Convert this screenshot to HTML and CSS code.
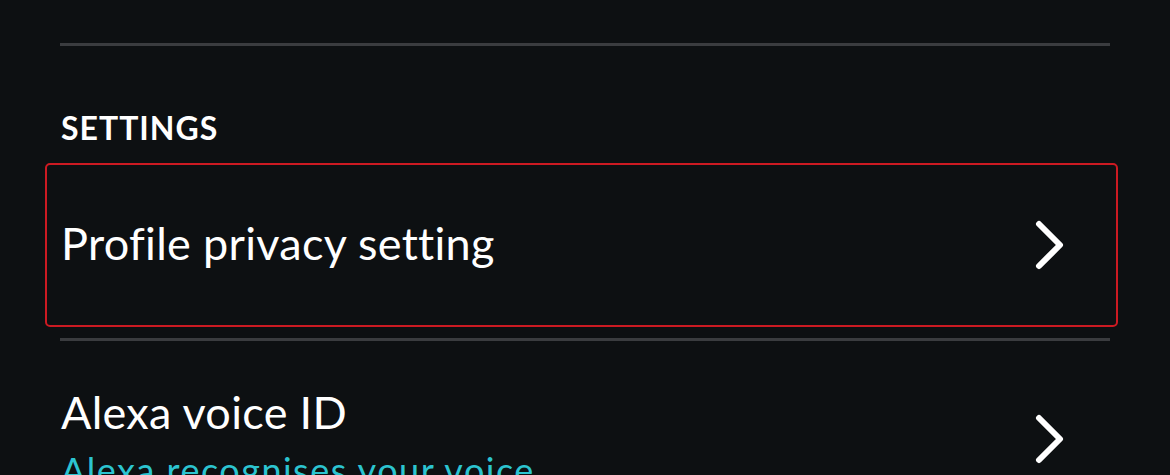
FILE: index.html
```html
<html>
    <head>
        <link rel="stylesheet" href="styles.css">
    </head>
    <body>
        <div class="page">
            <hr class="divider top">
            <h2 class="section-title">SETTINGS</h2>
            <div class="row focused">
                <div class="row-text">
                    <span class="row-title">Profile privacy setting</span>
                </div>
                <svg class="chevron" viewBox="0 0 30 50" width="30" height="50">
                    <path d="M4 4 L25 25 L4 46" fill="none" stroke="#fff" stroke-width="6" stroke-linecap="round" stroke-linejoin="round"/>
                </svg>
            </div>
            <hr class="divider">
            <div class="row">
                <div class="row-text">
                    <span class="row-title">Alexa voice ID</span>
                    <span class="row-sub">Alexa recognises your voice</span>
                </div>
                <svg class="chevron" viewBox="0 0 30 50" width="30" height="50">
                    <path d="M4 4 L25 25 L4 46" fill="none" stroke="#fff" stroke-width="6" stroke-linecap="round" stroke-linejoin="round"/>
                </svg>
            </div>
        </div>
    </body>
</html>
```
FILE: styles.css
```css
*{
    font-family: Lato, "Open Sans", sans-serif;
    box-sizing: border-box;
}
body{
    margin: 0px;
    background: #0d1012;
    color: #fff;
    overflow: hidden;
}
.page{
    width: 1170px;
    height: 475px;
    padding-top: 43px;
}
.divider{
    border: none;
    height: 3px;
    background: #3a3c3f;
    margin: 0px 60px;
}
.section-title{
    margin: 0px;
    padding: 62px 0px 0px 61px;
    font-size: 32px;
    font-weight: 700;
    letter-spacing: 1px;
    line-height: 40px;
}
.row{
    display: flex;
    align-items: center;
    justify-content: space-between;
    margin: 0px 52px 0px 45px;
    padding: 0px 51px 0px 14px;
    border: 2px solid transparent;
    border-radius: 5px;
}
.row.focused{
    margin-top: 15px;
    margin-bottom: 11px;
    height: 164px;
    border-color: #cc1a22;
}
.row.focused .row-title{
    margin-top: -4px;
}
.row-text{
    display: flex;
    flex-direction: column;
}
.row-title{
    font-size: 45px;
    letter-spacing: 0.3px;
    line-height: 52px;
}
.row-sub{
    font-size: 36px;
    letter-spacing: 1.5px;
    color: #2cc4d0;
    margin-top: 10px;
}
.row:not(.focused){
    padding-top: 43px;
}
.chevron{
    display: block;
}
```
